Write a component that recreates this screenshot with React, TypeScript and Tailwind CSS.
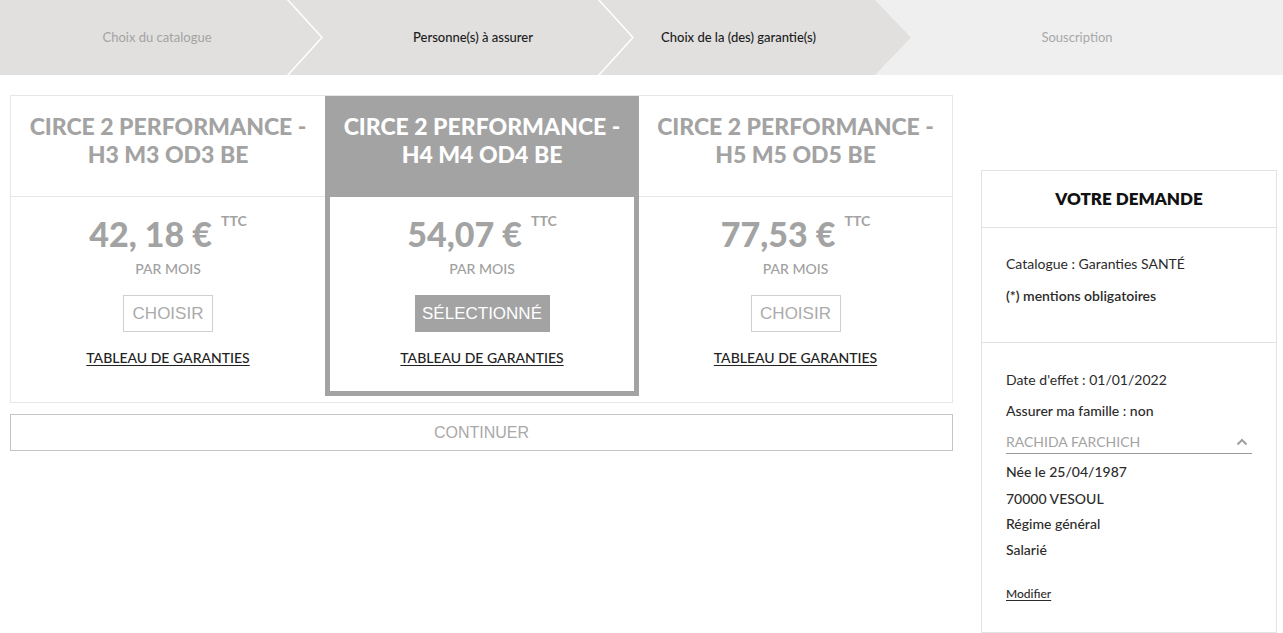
import React from "react";

const plans = [
  { l1: "CIRCE 2 PERFORMANCE -", l2: "H3 M3 OD3 BE", price: "42, 18 €", selected: false },
  { l1: "CIRCE 2 PERFORMANCE -", l2: "H4 M4 OD4 BE", price: "54,07 €", selected: true },
  { l1: "CIRCE 2 PERFORMANCE -", l2: "H5 M5 OD5 BE", price: "77,53 €", selected: false },
];

function Stepper() {
  return (
    <div className="relative h-[75px] w-[1283px]">
      <svg className="absolute inset-0" width="1283" height="75" viewBox="0 0 1283 75">
        <rect x="0" y="0" width="1283" height="75" fill="#e1e0df" />
        <polygon points="875,0 1283,0 1283,75 875,75 911,37.5" fill="#efefef" />
        <polyline points="287,-1 322,37.5 287,76" fill="none" stroke="#ffffff" strokeWidth="1.5" />
        <polyline points="598,-1 633,37.5 598,76" fill="none" stroke="#ffffff" strokeWidth="1.5" />
      </svg>
      <div className="relative flex h-full items-center text-[13px]">
        <div className="w-[314px] text-center text-[#a3a3a3]">Choix du catalogue</div>
        <div className="w-[318px] text-center font-medium text-[#1c1c1c]">Personne(s) à assurer</div>
        <div className="w-[239px] pr-[26px] text-center font-medium text-[#1c1c1c]">Choix de la (des) garantie(s)</div>
        <div className="w-[412px] text-center text-[#a8a8a8]">Souscription</div>
      </div>
    </div>
  );
}

function PlanColumn({ p, w }: { p: (typeof plans)[number]; w: string }) {
  const sel = p.selected;
  return (
    <div className={w}>
      <div
        className={
          "h-[101px] pt-[16px] text-center text-[23px] font-black leading-[28px] " +
          (sel ? "bg-[#a3a3a3] text-white" : "border-b border-[#e6e6e6] text-[#a3a3a3]")
        }
      >
        <div>{p.l1}</div>
        <div>{p.l2}</div>
      </div>
      <div
        className={
          "flex flex-col items-center pt-[18px] " +
          (sel ? "h-[199px] border-[5px] border-t-0 border-[#a3a3a3]" : "h-[205px]")
        }
      >
        <div className="flex items-start text-[#a3a3a3]">
          <span className="text-[34px] font-black leading-[38px]">{p.price}</span>
          <span className="ml-[9px] mt-[-2px] text-[14px] font-bold leading-[16px]">TTC</span>
        </div>
        <div className="mt-[7px] text-[14px] font-medium leading-[18px] text-[#a0a0a0]">PAR MOIS</div>
        <div
          className={
            "mt-[17px] flex h-[37px] items-center justify-center font-['Liberation_Sans',sans-serif] text-[17px] " +
            (sel
              ? "w-[135px] bg-[#a3a3a3] text-white"
              : "w-[90px] border border-[#cfcfcf] text-[#ababab]")
          }
        >
          {sel ? "SÉLECTIONNÉ" : "CHOISIR"}
        </div>
        <div className="mt-[17px] text-[14px] font-medium leading-[18px] text-[#222] underline underline-offset-2">
          TABLEAU DE GARANTIES
        </div>
      </div>
    </div>
  );
}

function Sidebar() {
  return (
    <div className="ml-[28px] mt-[95px] h-[463px] w-[296px] border border-[#e3e3e3] text-[14px] text-[#2b2b2b]">
      <div className="flex h-[57px] items-center justify-center border-b border-[#e3e3e3] text-[17px] font-extrabold text-[#111]">
        VOTRE DEMANDE
      </div>
      <div className="h-[115px] border-b border-[#e3e3e3] px-[24px] pt-[26px]">
        <div className="leading-[20px]">Catalogue : Garanties SANTÉ</div>
        <div className="mt-[12px] font-semibold leading-[20px]">(*) mentions obligatoires</div>
      </div>
      <div className="px-[24px] pt-[27px]">
        <div className="leading-[20px]">Date d'effet : 01/01/2022</div>
        <div className="mt-[11px] font-medium leading-[20px]">Assurer ma famille : non</div>
        <div className="mt-[11px] flex items-center justify-between border-b border-[#9a9a9a] pb-[1px] text-[#a3a3a3]">
          <span className="leading-[20px]">RACHIDA FARCHICH</span>
          <svg width="12" height="8" viewBox="0 0 12 8" className="mr-[4px]">
            <polyline points="1.5,6.5 6,2 10.5,6.5" fill="none" stroke="#a0a0a0" strokeWidth="2" />
          </svg>
        </div>
        <div className="mt-[8px] font-medium leading-[20px]">Née le 25/04/1987</div>
        <div className="mt-[7px] font-medium leading-[20px]">70000 VESOUL</div>
        <div className="mt-[5px] font-medium leading-[20px]">Régime général</div>
        <div className="mt-[6px] font-medium leading-[20px]">Salarié</div>
        <div className="mt-[26px] text-[12px] font-medium leading-[16px] underline underline-offset-2">Modifier</div>
      </div>
    </div>
  );
}

export default function App() {
  return (
    <div className="min-h-[633px] w-[1283px] bg-white font-[Lato,sans-serif]">
      <Stepper />
      <div className="flex items-start">
        <div className="ml-[10px] mt-[20px] w-[943px]">
          <div className="flex items-start border border-[#e6e6e6]">
            <PlanColumn p={plans[0]} w="w-[314px]" />
            <PlanColumn p={plans[1]} w="w-[314px]" />
            <PlanColumn p={plans[2]} w="flex-1" />
          </div>
          <div className="mt-[11px] flex h-[37px] items-center justify-center border border-[#c4c4c4] font-['Liberation_Sans',sans-serif] text-[16px] text-[#a9a9a9]">
            CONTINUER
          </div>
        </div>
        <Sidebar />
      </div>
    </div>
  );
}
